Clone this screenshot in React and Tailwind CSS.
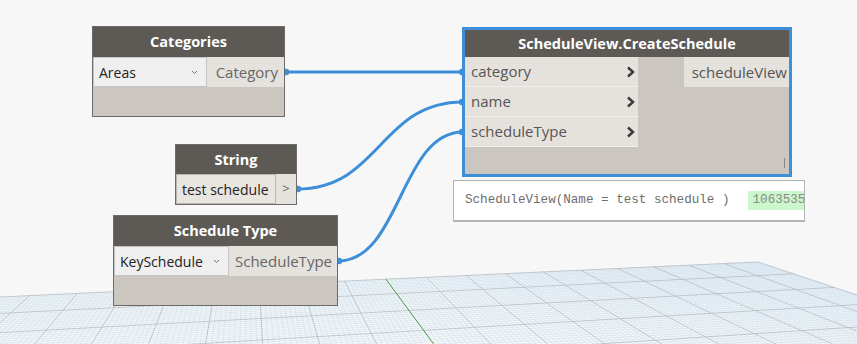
import React from "react";

// floor grid: 2-point perspective, far corner at (758,262)
const CORNER = [758, 262];
const VP_A = [248, 92];
const VP_B = [4439, 92];
const SA = -0.000918;
const SB = -0.0065;
const CELLS = 200;

function project(s, t) {
  const as = SA * s;
  const bt = SB * t;
  const d = 1 + as + bt;
  return [
    (CORNER[0] + as * VP_B[0] + bt * VP_A[0]) / d,
    (CORNER[1] + as * VP_B[1] + bt * VP_A[1]) / d,
  ];
}

function gridLines() {
  const lines = [];
  for (let s = 0; s <= CELLS; s++) {
    const tMax = Math.min(CELLS, (0.97 + SA * s) / -SB);
    if (tMax <= 0) continue;
    lines.push({ key: "s" + s, a: project(s, 0), b: project(s, tMax), major: s % 10 === 0, axis: s === 100 });
  }
  for (let t = 0; t <= CELLS; t++) {
    const sMax = Math.min(CELLS, (0.97 + SB * t) / -SA);
    if (sMax <= 0) continue;
    lines.push({ key: "t" + t, a: project(0, t), b: project(sMax, t), major: t % 10 === 0, axis: false });
  }
  return lines;
}

function FloorGrid() {
  const lines = gridLines();
  return (
    <svg className="absolute inset-0" width="857" height="344">
      {lines.filter(l => !l.major).map(l => (
        <line key={l.key} x1={l.a[0]} y1={l.a[1]} x2={l.b[0]} y2={l.b[1]} stroke="#cfe0ee" strokeWidth="0.6" />
      ))}
      {lines.filter(l => l.major && !l.axis).map(l => (
        <line key={l.key} x1={l.a[0]} y1={l.a[1]} x2={l.b[0]} y2={l.b[1]} stroke="#a7b1bb" strokeWidth="0.7" />
      ))}
      {lines.filter(l => l.axis).map(l => (
        <line key={l.key} x1={l.a[0]} y1={l.a[1]} x2={l.b[0]} y2={l.b[1]} stroke="#2f8f2f" strokeWidth="0.9" />
      ))}
    </svg>
  );
}

function wirePath(x1, y1, x2, y2) {
  const dx = (x2 - x1) / 2;
  return `M${x1} ${y1} C${x1 + dx} ${y1} ${x2 - dx} ${y2} ${x2} ${y2}`;
}

const WIRES = [
  [285, 72, 463, 72],
  [297, 189, 463, 102],
  [338, 261, 463, 132],
];

function Wires() {
  return (
    <svg className="absolute inset-0" width="857" height="344">
      {WIRES.map(([x1, y1, x2, y2], i) => (
        <g key={i}>
          <path d={wirePath(x1, y1, x2, y2)} fill="none" stroke="#3d8fd9" strokeWidth="3" />
          <circle cx={x1 + 1} cy={y1} r="3.2" fill="#3d8fd9" />
          <circle cx={x2 - 1} cy={y2} r="3.2" fill="#3d8fd9" />
        </g>
      ))}
    </svg>
  );
}

function Header({ title, className = "" }) {
  return (
    <div className={`flex items-center justify-center bg-[#5d5a56] text-[14.5px] font-bold text-white ${className}`}>
      {title}
    </div>
  );
}

function Dropdown({ value, className = "" }) {
  return (
    <div className={`flex items-center justify-between border border-[#c4c4c4] bg-[#efefef] pl-[5px] pr-[8px] text-[14px] text-[#222] ${className}`}>
      <span>{value}</span>
      <svg width="7" height="5" viewBox="0 0 7 5">
        <polyline points="1,1 3.5,3.5 6,1" fill="none" stroke="#777" strokeWidth="1" />
      </svg>
    </div>
  );
}

function Chevron() {
  return (
    <svg width="9" height="12" viewBox="0 0 9 12">
      <polyline points="2,1.5 7,6 2,10.5" fill="none" stroke="#3a3a3a" strokeWidth="2.4" />
    </svg>
  );
}

export default function App() {
  const inputs = ["category", "name", "scheduleType"];

  return (
    <div className="relative h-[344px] w-[857px] overflow-hidden bg-[#f7f7f7] font-['Open_Sans',sans-serif]">
      <FloorGrid />
      <Wires />

      {/* Categories */}
      <div className="absolute left-[92px] top-[26px] w-[193px] border border-[#6b6b6b] bg-[#cbc6bf]">
        <Header title="Categories" className="h-[30px]" />
        <div className="flex h-[30px]">
          <Dropdown value="Areas" className="w-[114px]" />
          <div className="flex flex-1 items-center justify-end bg-[#e5e2dd] pr-[6px] text-[15px] text-[#666]">Category</div>
        </div>
        <div className="h-[29px]" />
      </div>

      {/* String */}
      <div className="absolute left-[175px] top-[144px] w-[122px] border border-[#6b6b6b] bg-[#cbc6bf]">
        <Header title="String" className="h-[29px]" />
        <div className="flex h-[30px]">
          <div className="flex w-[100px] items-center border border-[#b9b6b1] bg-[#e8e5e0] pl-[5px] text-[14px] text-[#222]">test schedule</div>
          <div className="flex flex-1 items-center justify-center bg-[#e5e2dd] text-[13px] text-[#666]">&gt;</div>
        </div>
      </div>

      {/* Schedule Type */}
      <div className="absolute left-[113px] top-[215px] w-[225px] border border-[#6b6b6b] bg-[#cbc6bf]">
        <Header title="Schedule Type" className="h-[30px]" />
        <div className="flex h-[30px]">
          <Dropdown value="KeySchedule" className="w-[115px]" />
          <div className="flex flex-1 items-center justify-end bg-[#e5e2dd] pr-[5px] text-[15px] text-[#666]">ScheduleType</div>
        </div>
        <div className="h-[29px]" />
      </div>

      {/* ScheduleView.CreateSchedule (selected) */}
      <div className="absolute left-[462px] top-[27px] flex h-[150px] w-[330px] flex-col border-[3px] border-[#3d8fd9] bg-[#cbc6bf]">
        <Header title="ScheduleView.CreateSchedule" className="h-[27px]" />
        <div className="flex">
          <div className="w-[173px]">
            {inputs.map(name => (
              <div key={name} className="flex h-[30px] items-center justify-between border-b border-[#f1efeb] bg-[#e5e2dd] pl-[6px] pr-[3px] text-[15px] text-[#555]">
                <span>{name}</span>
                <Chevron />
              </div>
            ))}
          </div>
          <div className="flex flex-1 justify-end">
            <div className="flex h-[30px] w-[105px] items-center justify-end bg-[#e5e2dd] pr-[2px] text-[15px] text-[#555]">scheduleView</div>
          </div>
        </div>
        <div className="flex flex-1 items-end justify-end pb-[6px] pr-[4px]">
          <div className="h-[10px] w-px bg-[#888]" />
        </div>
      </div>

      {/* preview bubble */}
      <div className="absolute left-[453px] top-[180px] flex h-[42px] w-[352px] items-center overflow-hidden border border-b-2 border-[#b3b3b3] bg-white pl-[11px] font-['Liberation_Mono',monospace] text-[12.6px] text-[#6e6e6e]">
        <span className="whitespace-pre">ScheduleView(Name = test schedule )</span>
        <span className="ml-[18px] flex h-[19px] shrink-0 items-center whitespace-pre bg-[#ccf7cc] pl-[5px] pr-[10px] text-[#8a8a8a]">1063535</span>
      </div>
    </div>
  );
}
